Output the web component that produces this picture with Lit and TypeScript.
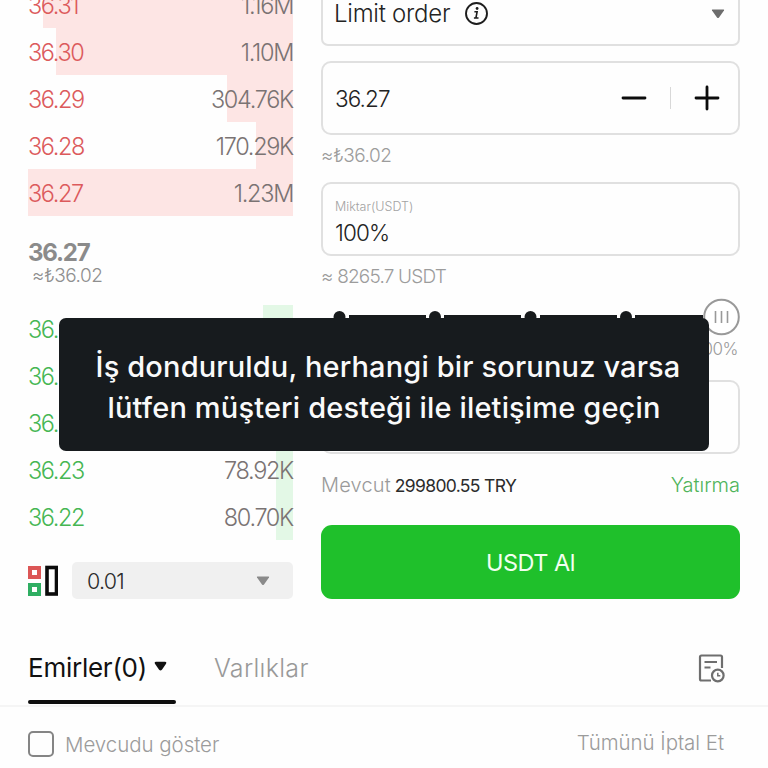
import {css, html, LitElement} from "lit";
import {customElement, property} from "lit/decorators.js";

interface Level {
  price: string;
  amount: string;
  depth: number;
}

const ASKS: Level[] = [
  { price: "36.31", amount: "1.16M", depth: 250 },
  { price: "36.30", amount: "1.10M", depth: 237 },
  { price: "36.29", amount: "304.76K", depth: 66 },
  { price: "36.28", amount: "170.29K", depth: 37 },
  { price: "36.27", amount: "1.23M", depth: 265 },
];

const BIDS: Level[] = [
  { price: "36.26", amount: "140.20K", depth: 30 },
  { price: "36.25", amount: "96.11K", depth: 20 },
  { price: "36.24", amount: "85.34K", depth: 18 },
  { price: "36.23", amount: "78.92K", depth: 17 },
  { price: "36.22", amount: "80.70K", depth: 17 },
];

@customElement("order-book")
export class OrderBook extends LitElement {
  static override styles = css`
    :host {
      display: block;
      width: 265px;
    }
    .row {
      position: relative;
      display: flex;
      justify-content: space-between;
      height: 47px;
      line-height: 50px;
      font-size: 23.5px;
      letter-spacing: -1.4px;
      color: #7a7373;
    }
    .depth {
      position: absolute;
      top: 0;
      right: 0;
      height: 100%;
      background: #fde5e4;
    }
    .bid .depth {
      background: #e3f8e6;
    }
    .price,
    .amount {
      position: relative;
    }
    .price {
      color: #dc5a5c;
    }
    .amount {
      letter-spacing: -1.3px;
    }
    .bid .price {
      color: #46b653;
    }
    .last {
      height: 66px;
      padding-top: 23px;
    }
    .last-price {
      font-size: 24px;
      font-weight: 700;
      line-height: 27px;
      letter-spacing: -1.2px;
      color: #8b8b8b;
    }
    .last-fiat {
      font-size: 19px;
      line-height: 20px;
      padding-left: 4px;
      letter-spacing: -0.5px;
      color: #8f8f8f;
    }
    .tools {
      display: flex;
      align-items: center;
      gap: 14px;
      height: 37px;
      margin-top: 22px;
    }
    .tick {
      flex: 1;
      display: flex;
      align-items: center;
      justify-content: space-between;
      height: 37px;
      box-sizing: border-box;
      padding: 0 23px 0 15px;
      border-radius: 5px;
      background: #f0f0f0;
      color: #2a2a2a;
      font-size: 21.5px;
      letter-spacing: -0.8px;
    }
    svg {
      display: block;
    }
  `;

  renderLevel(level: Level, side: string) {
    return html`
      <div class="row ${side}">
        <span class="depth" style="width: ${level.depth}px"></span>
        <span class="price">${level.price}</span>
        <span class="amount">${level.amount}</span>
      </div>
    `;
  }

  override render() {
    return html`
      ${ASKS.map((level) => this.renderLevel(level, "ask"))}
      <div class="last">
        <div class="last-price">36.27</div>
        <div class="last-fiat">≈₺36.02</div>
      </div>
      ${BIDS.map((level) => this.renderLevel(level, "bid"))}
      <div class="tools">
        <svg width="30" height="32" viewBox="0 0 30 32" fill="none">
          <rect x="2" y="3" width="9" height="9" stroke="#dc5656" stroke-width="4" fill="#fff" />
          <rect x="2" y="20" width="9" height="9" stroke="#2fae62" stroke-width="4" fill="#fff" />
          <rect x="19" y="2.500" width="9.500" height="26.500" stroke="#0b0b0b" stroke-width="3.600" />
        </svg>
        <div class="tick">
          <span>0.01</span>
          <svg width="14" height="10" viewBox="0 0 14 10">
            <path d="M1.5 0.5h11q1 0 .5 1L8 8.6q-1 1-2 0L1 1.5q-.5-1 .5-1z" fill="#8a8a8a" />
          </svg>
        </div>
      </div>
    `;
  }
}

@customElement("order-form")
export class OrderForm extends LitElement {
  static override styles = css`
    :host {
      display: block;
      width: 419px;
    }
    svg {
      display: block;
    }
    .field {
      display: flex;
      align-items: center;
      box-sizing: border-box;
      height: 74px;
      border: 2px solid #e0e0e0;
      border-radius: 10px;
      padding: 0 13px;
      font-size: 22.5px;
      color: #232323;
    }
    .type {
      height: 73px;
      padding: 8px 13px 0 11px;
      border-radius: 7px;
    }
    .type-name {
      font-size: 24px;
      letter-spacing: -0.25px;
      margin-right: 14px;
    }
    .type-arrow {
      margin-left: auto;
    }
    .price {
      margin-top: 15px;
      padding-left: 12px;
      padding-right: 18px;
      letter-spacing: -0.9px;
    }
    .stepper {
      display: flex;
      align-items: center;
      gap: 23px;
      margin-left: auto;
    }
    .divider {
      width: 1px;
      height: 22px;
      background: #d8d8d8;
    }
    .hint {
      height: 47px;
      line-height: 42px;
      font-size: 19px;
      letter-spacing: -0.5px;
      color: #9c9c9c;
    }
    .amount {
      flex-direction: column;
      align-items: flex-start;
      padding-top: 14px;
      padding-left: 12px;
      letter-spacing: -0.9px;
    }
    .label {
      font-size: 12.5px;
      line-height: 18px;
      letter-spacing: 0;
      color: #a3a3a3;
    }
    .value {
      line-height: 34px;
    }
    .converted {
      height: 42px;
      letter-spacing: -0.8px;
    }
    .slider {
      display: flex;
      align-items: center;
      height: 38px;
    }
    .percent {
      height: 24px;
      line-height: 27px;
      margin-right: 2px;
      text-align: right;
      font-size: 17px;
      letter-spacing: -0.5px;
      color: #9a9a9a;
    }
    .total {
      margin-top: 20px;
    }
    .balance {
      display: flex;
      height: 71px;
      line-height: 63px;
      font-size: 20px;
      letter-spacing: 0.15px;
      color: #9a9a9a;
    }
    .available {
      margin-left: 4px;
      font-size: 17.5px;
      font-weight: 400;
      letter-spacing: -0.65px;
      color: #2b2b2b;
    }
    .deposit {
      margin-left: auto;
      letter-spacing: 0;
      color: #4fb45a;
    }
    .buy {
      display: block;
      width: 100%;
      height: 74px;
      padding: 0;
      border: 0;
      border-radius: 11px;
      background: #1fc02b;
      color: #f2fff0;
      font: 400 23.5px/75px Inter, "Liberation Sans", sans-serif;
      letter-spacing: -0.5px;
    }
  `;

  override render() {
    return html`
      <div class="field type">
        <span class="type-name">Limit order</span>
        <svg width="25" height="25" viewBox="0 0 25 25" fill="none" stroke="#1d1d1d" stroke-width="1.9">
          <circle cx="12.5" cy="12.5" r="10.5" />
          <path d="M10.4 10.8h2.7l-1.2 6.2h2.6M9.9 17h3" stroke-width="1.6" />
          <circle cx="13.1" cy="7.5" r="1.4" fill="#1d1d1d" stroke="none" />
        </svg>
        <svg class="type-arrow" width="14" height="10" viewBox="0 0 14 10">
          <path d="M1.5 0.5h11q1 0 .5 1L8 8.6q-1 1-2 0L1 1.5q-.5-1 .5-1z" fill="#6d6d6d" />
        </svg>
      </div>
      <div class="field price">
        <span>36.27</span>
        <div class="stepper">
          <svg width="26" height="26" viewBox="0 0 26 26" stroke="#0c0c0c" stroke-width="2.8" stroke-linecap="round">
            <path d="M2 13h22" />
          </svg>
          <span class="divider"></span>
          <svg width="26" height="26" viewBox="0 0 26 26" stroke="#0c0c0c" stroke-width="2.8" stroke-linecap="round">
            <path d="M2 13h22M13 2v22" />
          </svg>
        </div>
      </div>
      <div class="hint">≈₺36.02</div>
      <div class="field amount">
        <span class="label">Miktar(USDT)</span>
        <span class="value">100%</span>
      </div>
      <div class="hint converted">≈ 8265.7 USDT</div>
      <div class="slider">
        <svg width="419" height="38" viewBox="0 0 419 38" fill="none">
          <path d="M28 19h77M123 19h77M219 19h77M314 19h68" stroke="#171a1c" stroke-width="4" />
          <g fill="#171a1c">
            <circle cx="18.5" cy="19" r="6" />
            <circle cx="114" cy="19" r="6" />
            <circle cx="209.5" cy="19" r="6" />
            <circle cx="305" cy="19" r="6" />
          </g>
          <circle cx="400.5" cy="19" r="17.3" fill="#fff" stroke="#999" stroke-width="2" />
          <path d="M394.5 13v12M400.5 13v12M406.5 13v12" stroke="#999" stroke-width="1.6" />
        </svg>
      </div>
      <div class="percent">100%</div>
      <div class="field total"></div>
      <div class="balance">
        <span>Mevcut</span>
        <span class="available">299800.55 TRY</span>
        <span class="deposit">Yatırma</span>
      </div>
      <button class="buy">USDT Al</button>
    `;
  }
}

@customElement("orders-panel")
export class OrdersPanel extends LitElement {
  static override styles = css`
    :host {
      display: block;
    }
    svg {
      display: block;
    }
    .tabs {
      display: flex;
      box-sizing: border-box;
      height: 77px;
      padding: 0 42px 0 28px;
      border-bottom: 2px solid #f5f5f5;
      font-size: 25px;
      line-height: 76px;
      letter-spacing: 0.3px;
      color: #999;
    }
    .tab {
      display: flex;
      align-items: center;
      box-sizing: border-box;
      height: 76px;
    }
    .active {
      position: relative;
      width: 148px;
      margin-right: 38px;
      gap: 7px;
      font-size: 26px;
      font-weight: 400;
      letter-spacing: -0.25px;
      color: #111;
    }
    .active svg {
      margin-bottom: 3px;
    }
    .underline {
      position: absolute;
      left: 0;
      right: 0;
      bottom: 2px;
      height: 4px;
      border-radius: 2px;
      background: #0e0e0e;
    }
    .history {
      margin-left: auto;
      padding-top: 23px;
    }
    .filters {
      display: flex;
      align-items: center;
      height: 74px;
      padding: 0 44px 0 28px;
      font-size: 20.5px;
      letter-spacing: -0.05px;
      color: #9b9b9b;
    }
    .check {
      box-sizing: border-box;
      width: 26px;
      height: 26px;
      margin-right: 11px;
      border: 2px solid #858585;
      border-radius: 5px;
    }
    .cancel {
      margin-left: auto;
      padding-bottom: 4px;
    }
  `;

  override render() {
    return html`
      <div class="tabs">
        <div class="tab active">
          <span>Emirler(0)</span>
          <svg width="13" height="11" viewBox="0 0 14 11">
            <path d="M2 0.5h10q2 0 1 2L8.5 9q-1.5 1.8-3 0L1 2.5q-1-2 1-2z" fill="#111" />
          </svg>
          <span class="underline"></span>
        </div>
        <div class="tab">Varlıklar</div>
        <div class="history">
          <svg width="28" height="30" viewBox="0 0 28 30" fill="none" stroke="#6e6e6e" stroke-width="2.2">
            <path d="M13 27.500H3.500q-1.500 0-1.500-1.500V4q0-1.500 1.500-1.500h19q1.500 0 1.500 1.500v11" />
            <path d="M6.500 9h12.500M6.500 14.500h6" />
            <circle cx="19.800" cy="22.500" r="5.800" />
            <path d="M19.800 19.800v3h2.500" stroke-width="1.500" />
          </svg>
        </div>
      </div>
      <div class="filters">
        <span class="check"></span>
        <span>Mevcudu göster</span>
        <span class="cancel">Tümünü İptal Et</span>
      </div>
    `;
  }
}

@customElement("app-root")
export class AppRoot extends LitElement {
  static override styles = css`
    :host {
      display: block;
      position: relative;
      width: 768px;
      height: 768px;
      overflow: hidden;
      background: #fefefe;
      font-family: Inter, "Liberation Sans", sans-serif;
      font-weight: 300;
    }
    .trade {
      display: flex;
      align-items: flex-start;
      gap: 28px;
      height: 630px;
      padding-left: 28px;
    }
    .book {
      margin-top: -19px;
    }
    .form {
      margin-top: -27px;
    }
    .toast {
      position: absolute;
      left: 59px;
      top: 318px;
      width: 650px;
      height: 133px;
      box-sizing: border-box;
      padding: 28px 0 0 8px;
      border-radius: 7px;
      background: #171b1e;
      color: #fafafa;
      font-size: 29px;
      font-weight: 500;
      line-height: 41px;
      letter-spacing: 0.15px;
      text-align: center;
      white-space: pre;
    }
  `;

  @property({ type: String }) message =
    "İş donduruldu, herhangi bir sorunuz varsa\nlütfen müşteri desteği ile iletişime geçin ";

  override render() {
    return html`
      <div class="trade">
        <order-book class="book"></order-book>
        <order-form class="form"></order-form>
      </div>
      <orders-panel></orders-panel>
      <div class="toast" role="alert">${this.message}</div>
    `;
  }
}

declare global {
  interface HTMLElementTagNameMap {
    "order-book": OrderBook;
    "order-form": OrderForm;
    "orders-panel": OrdersPanel;
    "app-root": AppRoot;
  }
}
